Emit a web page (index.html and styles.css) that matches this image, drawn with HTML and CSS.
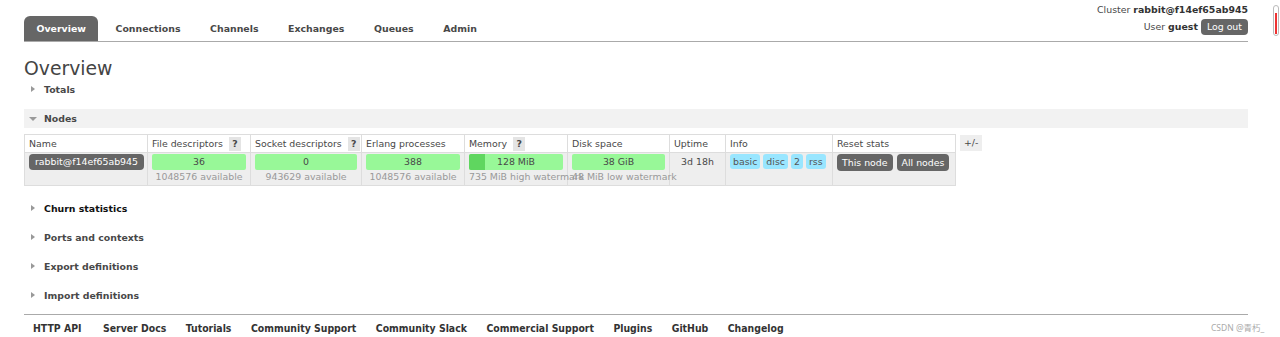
FILE: index.html
```html
<!DOCTYPE html>
<html lang="en">
   <head>
      <meta charset="UTF-8">
      <meta name="viewport" content="width=device-width, initial-scale=1.0">
      <title>RabbitMQ Management</title>
      <link rel="stylesheet" href="styles.css">
   </head>
   <body>
      <div class="page">
         <div class="header">
            <ul class="tabs">
               <li class="active">Overview</li>
               <li>Connections</li>
               <li>Channels</li>
               <li>Exchanges</li>
               <li>Queues</li>
               <li>Admin</li>
            </ul>
            <div class="login">
               <p>Cluster <b>rabbit@f14ef65ab945</b></p>
               <p>User <b>guest</b> <span class="btn">Log out</span></p>
            </div>
         </div>

         <h1>Overview</h1>

         <div class="section"><h2>Totals</h2></div>

         <div class="section open">
            <h2>Nodes</h2>
            <div class="nodes">
               <table class="nodes-table">
                  <colgroup>
                     <col style="width:123px"><col style="width:103px"><col style="width:111px">
                     <col style="width:103px"><col style="width:103px"><col style="width:102px">
                     <col style="width:56px"><col style="width:107px"><col style="width:123px">
                  </colgroup>
                  <tr>
                     <th>Name</th>
                     <th>File descriptors <span class="help">?</span></th>
                     <th>Socket descriptors <span class="help">?</span></th>
                     <th>Erlang processes</th>
                     <th>Memory <span class="help">?</span></th>
                     <th>Disk space</th>
                     <th>Uptime</th>
                     <th>Info</th>
                     <th>Reset stats</th>
                  </tr>
                  <tr>
                     <td><span class="pill">rabbit@f14ef65ab945</span></td>
                     <td><div class="bar">36</div><div class="sub">1048576 available</div></td>
                     <td><div class="bar">0</div><div class="sub">943629 available</div></td>
                     <td><div class="bar">388</div><div class="sub">1048576 available</div></td>
                     <td><div class="bar"><span class="used" style="width:16px"></span>128 MiB</div><div class="sub left">735 MiB high watermark</div></td>
                     <td><div class="bar">38 GiB</div><div class="sub left">48 MiB low watermark</div></td>
                     <td class="uptime">3d 18h</td>
                     <td><span class="tag">basic</span><span class="tag">disc</span><span class="tag">2</span><span class="tag">rss</span></td>
                     <td><span class="btn">This node</span><span class="btn">All nodes</span></td>
                  </tr>
               </table>
               <span class="toggle">+/-</span>
            </div>
         </div>

         <div class="section"><h2 class="dark">Churn statistics</h2></div>
         <div class="section"><h2>Ports and contexts</h2></div>
         <div class="section"><h2>Export definitions</h2></div>
         <div class="section"><h2>Import definitions</h2></div>

         <div class="footer">
            <a>HTTP API</a>
            <a>Server Docs</a>
            <a>Tutorials</a>
            <a>Community Support</a>
            <a>Community Slack</a>
            <a>Commercial Support</a>
            <a>Plugins</a>
            <a>GitHub</a>
            <a>Changelog</a>
         </div>
      </div>
      <div class="meter"><div class="meter-fill"></div></div>
      <div class="watermark">CSDN @青朽_</div>
   </body>
</html>
```

FILE: styles.css
```css
/* RabbitMQ management overview */
body {
font-family: "DejaVu Sans", Verdana, sans-serif;
font-size: 9.4px;
color: #484848;
background-color: #fff;
margin: 0;
}
.page {
padding: 0 32px 0 24px;
}
p {
margin: 0;
}
.header {
display: flex;
justify-content: space-between;
align-items: flex-end;
border-bottom: 1px solid #aaa;
height: 41px;
}
.tabs {
display: flex;
gap: 4.6px;
list-style: none;
margin: 0;
padding: 0;
}
.tabs li {
font-weight: bold;
height: 25px;
line-height: 25px;
padding: 0 12.5px;
border-radius: 6px 6px 0 0;
color: #484848;
}
.tabs li.active {
background-color: #666;
color: #fff;
}
.login {
text-align: right;
padding-bottom: 6px;
}
.login p {
height: 17px;
line-height: 17px;
}
.login b {
color: #333;
}
.btn {
display: inline-block;
background-color: #666;
color: #fff;
border-radius: 4px;
padding: 0 5px;
height: 17px;
line-height: 17px;
}
.login .btn {
padding: 0 6px;
height: 16px;
line-height: 16px;
}
h1 {
font-size: 18.8px;
font-weight: normal;
color: #444;
margin: 16px 0 0;
line-height: 22px;
}
.section {
margin-top: 10px;
}
h1 + .section {
margin-top: 0;
}
h2 {
font-size: 9.4px;
font-weight: bold;
color: #484848;
margin: 0;
height: 19px;
line-height: 19px;
padding-left: 20px;
position: relative;
}
h2.dark {
color: #111;
}
h2::before {
content: "";
position: absolute;
left: 7px;
top: 6px;
border-style: solid;
border-width: 3.5px 0 3.5px 4px;
border-color: transparent transparent transparent #999;
}
.open h2 {
background-color: #f2f2f2;
}
.open h2::before {
left: 5px;
top: 8px;
border-width: 4px 4px 0 4px;
border-color: #999 transparent transparent transparent;
}
.nodes {
display: flex;
align-items: flex-start;
margin: 6px 0 13px;
}
.nodes-table {
border-collapse: collapse;
table-layout: fixed;
width: 931px;
border: 1px solid #ddd;
}
.nodes-table th {
font-weight: normal;
text-align: left;
height: 17px;
padding: 0 4px;
border: 1px solid #ddd;
white-space: nowrap;
background-color: #fff;
}
.nodes-table td {
vertical-align: top;
padding: 1px 4px 2px;
height: 29px;
border: 1px solid #ddd;
background-color: #eee;
white-space: nowrap;
}
.help {
display: inline-block;
background-color: #e4e4e4;
font-weight: bold;
width: 12px;
height: 14px;
line-height: 14px;
text-align: center;
margin-left: 3px;
}
.pill {
display: inline-block;
background-color: #666;
color: #fff;
border-radius: 4px;
padding: 0 6px;
height: 16px;
line-height: 16px;
}
.bar {
position: relative;
z-index: 0;
background-color: #98f898;
height: 16px;
line-height: 16px;
text-align: center;
border-radius: 2px;
overflow: hidden;
}
.bar .used {
position: absolute;
z-index: -1;
left: 0;
top: 0;
bottom: 0;
background-color: #5fd65f;
}
.sub {
color: #999;
text-align: center;
line-height: 13px;
}
.sub.left {
text-align: left;
}
.uptime {
text-align: center;
line-height: 16px;
}
.tag {
display: inline-block;
background-color: #99e6ff;
color: #555;
border-radius: 3px;
padding: 0 3px;
height: 15px;
line-height: 15px;
margin-right: 3px;
}
td .btn {
margin-right: 4px;
}
.toggle {
background-color: #eee;
padding: 0 4px;
height: 16px;
line-height: 16px;
margin: 1px 0 0 4px;
}
.footer {
margin-top: 9px;
border-top: 1px solid #aaa;
display: flex;
gap: 19.5px;
padding: 0 9px;
height: 26px;
align-items: center;
}
.footer a {
font-family: "DejaVu Sans Condensed", "DejaVu Sans", sans-serif;
font-weight: bold;
font-size: 10.4px;
color: #333;
}
.footer a:first-child {
margin-right: 2px;
}
.meter {
position: absolute;
left: 1273px;
top: 5px;
width: 4px;
height: 29px;
border: 1px solid #bbb;
border-radius: 3px;
background-color: #fff;
}
.meter-fill {
position: absolute;
left: 1px;
right: 1px;
top: 7px;
bottom: 1px;
background-color: #e33;
}
.watermark {
position: absolute;
left: 1211px;
top: 321px;
font-family: "Noto Sans", "Noto Sans CJK SC", sans-serif;
font-size: 8.5px;
color: #aaa;
}
```
